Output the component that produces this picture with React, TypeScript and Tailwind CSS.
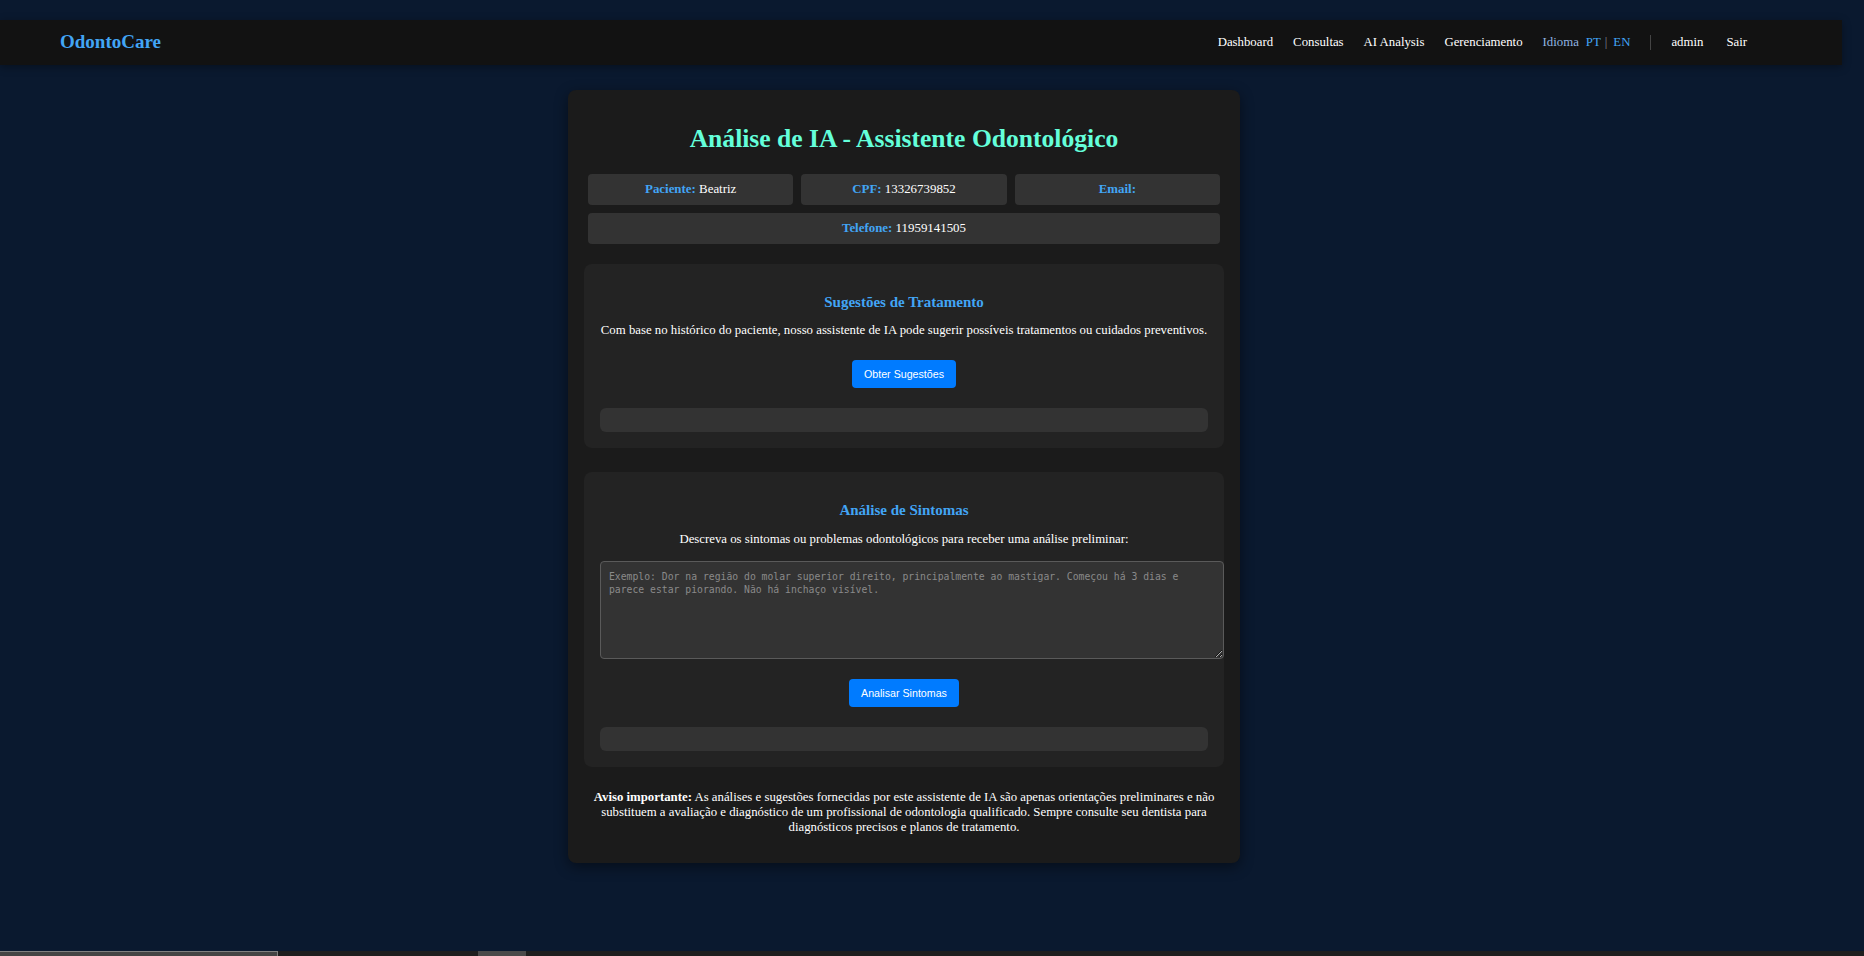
import React from "react";

const navLinks = ["Dashboard", "Consultas", "AI Analysis", "Gerenciamento"];

function InfoBox({ label, value, wide }: { label: string; value: string; wide?: boolean }) {
  return (
    <div
      className={`rounded bg-[#333333] py-2 text-center text-[12.9px] leading-[15px] ${
        wide ? "col-span-3" : ""
      }`}
    >
      <span className="font-bold text-[#42a5f5]">{label}</span> <span className="text-white">{value}</span>
    </div>
  );
}

function ActionButton({ children }: { children: React.ReactNode }) {
  return (
    <div className="flex justify-center">
      <button className="h-7 rounded bg-[#007bff] px-3 font-['Liberation_Sans',Arial,sans-serif] text-[10.67px] text-white">
        {children}
      </button>
    </div>
  );
}

export default function App() {
  return (
    <div className="flex h-[956px] flex-col overflow-hidden bg-[#0a192f] font-['Liberation_Serif','Times_New_Roman',serif] text-white">
      {/* Navbar */}
      <nav className="mt-5 flex h-[45px] w-[1842px] shrink-0 items-center justify-between bg-[#121212] pl-[60px] pr-[95px] shadow-[0_2px_8px_rgba(0,0,0,0.35)]">
        <span className="text-[19px] font-bold text-[#42a5f5]">OdontoCare</span>
        <div className="flex items-center gap-5 text-[12.8px] leading-[15px]">
          {navLinks.map((l) => (
            <span key={l}>{l}</span>
          ))}
          <div className="flex items-center">
            <span className="text-[#90b4e0]">Idioma</span>
            <span className="ml-[7px] text-[#42a5f5]">PT</span>
            <span className="ml-[4px] text-[#7f8b99]">|</span>
            <span className="ml-[6px] text-[#42a5f5]">EN</span>
          </div>
          <div className="h-[15px] w-px bg-[#444444]" />
          <span>admin</span>
          <span className="ml-[3px]">Sair</span>
        </div>
      </nav>

      {/* Main */}
      <div className="flex w-[1808px] justify-center pt-[25px]">
        <div className="w-[672px] rounded-lg bg-[#1b1b1b] px-4 pb-[28px] pt-[34px] shadow-[0_4px_14px_rgba(0,0,0,0.45)]">
          <h2 className="text-center text-[25.6px] font-bold leading-[30px] text-[#64ffda]">
            Análise de IA - Assistente Odontológico
          </h2>

          <div className="mx-1 mt-5 grid grid-cols-3 gap-2">
            <InfoBox label="Paciente:" value="Beatriz" />
            <InfoBox label="CPF:" value="13326739852" />
            <InfoBox label="Email:" value="" />
            <InfoBox label="Telefone:" value="11959141505" wide />
          </div>

          {/* Sugestões */}
          <section className="mt-5 rounded-lg bg-[#232323] px-4 pb-4 pt-[30px]">
            <h3 className="text-center text-[15px] font-bold leading-[17px] text-[#42a5f5]">
              Sugestões de Tratamento
            </h3>
            <p className="-mx-2 mt-[12px] whitespace-nowrap text-center text-[12.8px] leading-[15px]">
              Com base no histórico do paciente, nosso assistente de IA pode sugerir possíveis tratamentos ou cuidados
              preventivos.
            </p>
            <div className="mt-[22px]">
              <ActionButton>Obter Sugestões</ActionButton>
            </div>
            <div className="mt-5 h-6 rounded-md bg-[#333333]" />
          </section>

          {/* Sintomas */}
          <section className="mt-6 rounded-lg bg-[#232323] px-4 pb-4 pt-[30px]">
            <h3 className="text-center text-[15px] font-bold leading-[17px] text-[#42a5f5]">Análise de Sintomas</h3>
            <p className="mt-[13px] text-center text-[12.8px] leading-[15px]">
              Descreva os sintomas ou problemas odontológicos para receber uma análise preliminar:
            </p>
            <textarea
              className="mt-[14px] block h-[98px] w-[624px] rounded border border-[#5a5a5a] bg-[#333333] p-2 pr-[10px] font-['DejaVu_Sans_Mono',monospace] text-[9.75px] leading-[13px] text-white placeholder:text-[#8a8a8a]"
              placeholder="Exemplo: Dor na região do molar superior direito, principalmente ao mastigar. Começou há 3 dias e parece estar piorando. Não há inchaço visível."
            />
            <div className="mt-5">
              <ActionButton>Analisar Sintomas</ActionButton>
            </div>
            <div className="mt-5 h-6 rounded-md bg-[#333333]" />
          </section>

          <p className="mt-[23px] text-center text-[12.8px] leading-[15px]">
            <strong>Aviso importante:</strong> As análises e sugestões fornecidas por este assistente de IA são apenas
            orientações preliminares e não substituem a avaliação e diagnóstico de um profissional de odontologia
            qualificado. Sempre consulte seu dentista para diagnósticos precisos e planos de tratamento.
          </p>
        </div>
      </div>

      <div className="flex-1" />

      {/* bottom strip */}
      <div className="flex h-[5px] w-full shrink-0 bg-[#1e1e1e]">
        <div className="h-full w-[278px] border-r border-t border-[#808080] bg-[#444444]" />
        <div className="ml-[200px] h-full w-[48px] bg-[#4a4a4a]" />
      </div>
    </div>
  );
}
